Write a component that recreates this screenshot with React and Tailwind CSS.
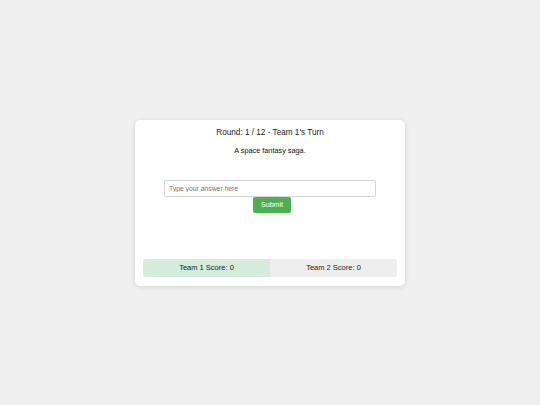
import React, { useState } from 'react';

const App = () => {
  const [answer, setAnswer] = useState("");

  return (
    <div className="w-[540px] h-[405px] bg-[#f0f0f0] flex items-center justify-center" style={{ fontFamily: '"Liberation Sans", Arial, sans-serif' }}>
      {/* Game card */}
      <div className="w-[270px] h-[166px] bg-white rounded-[5px] shadow-[0_1px_5px_rgba(0,0,0,0.12)] px-[8px] pt-[7px] pb-[9px] flex flex-col">
        <div className="text-center text-[8.2px] leading-[12px] text-[#222]">Round: 1 / 12 - Team 1's Turn</div>
        <div className="text-center text-[7.3px] leading-[10px] text-[#111] mt-[7px]">A space fantasy saga.</div>

        {/* Answer form */}
        <div className="flex flex-col items-center mt-[24px]">
          <input
            type="text"
            value={answer}
            onChange={(e) => setAnswer(e.target.value)}
            placeholder="Type your answer here"
            className="w-[212px] h-[17px] border border-[#d6d6d6] rounded-[2px] px-[4px] text-[6.8px] text-black placeholder:text-[#757575] focus:outline-none"
          />
          <button className="ml-[4px] w-[38px] h-[16px] pt-[1px] bg-[#4caf50] text-white text-[7px] rounded-[2px]">
            Submit
          </button>
        </div>

        {/* Scores */}
        <div className="mt-auto flex h-[18px] rounded-[3px] overflow-hidden">
          <div className="flex-1 bg-[#d4edda] flex items-center justify-center text-[7.5px] text-[#222]">Team 1 Score: 0</div>
          <div className="flex-1 bg-[#eeeeee] flex items-center justify-center text-[7.5px] text-[#222]">Team 2 Score: 0</div>
        </div>
      </div>
    </div>
  );
};

export default App;
